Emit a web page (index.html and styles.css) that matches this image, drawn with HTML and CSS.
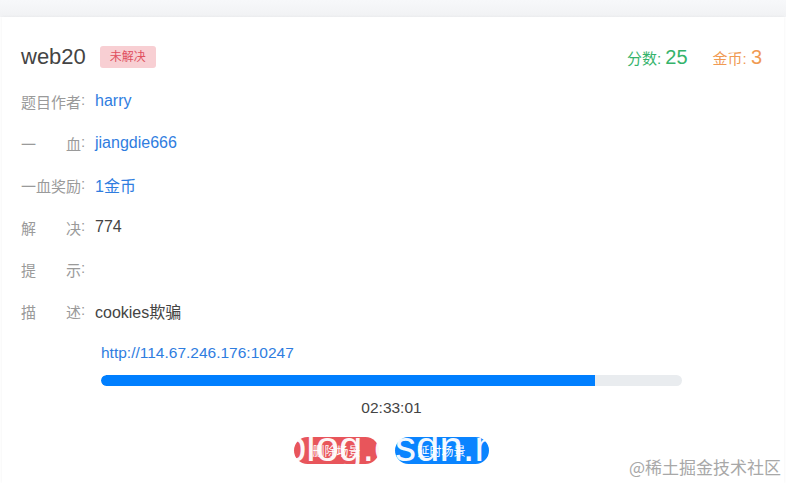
FILE: index.html
```html
<!DOCTYPE html>
<html lang="zh">
<head>
    <meta charset="UTF-8">
    <meta name="viewport" content="width=device-width, initial-scale=1.0">
    <title>web20</title>
    <link rel="stylesheet" href="styles.css">
</head>
<body>

<div class="card">
    <div class="head">
        <div class="title">
            <span class="name">web20</span>
            <span class="badge">未解决</span>
        </div>
        <div class="stats">
            <span class="score">分数: <b>25</b></span>
            <span class="coin">金币: <b>3</b></span>
        </div>
    </div>

    <div class="rows">
        <div class="row"><span class="label"><i>题目作者</i>:</span><span class="value link">harry</span></div>
        <div class="row"><span class="label"><i>一　　血</i>:</span><span class="value link">jiangdie666</span></div>
        <div class="row"><span class="label"><i>一血奖励</i>:</span><span class="value link">1金币</span></div>
        <div class="row"><span class="label"><i>解　　决</i>:</span><span class="value">774</span></div>
        <div class="row"><span class="label"><i>提　　示</i>:</span><span class="value"></span></div>
        <div class="row"><span class="label"><i>描　　述</i>:</span><span class="value">cookies欺骗</span></div>
    </div>

    <div class="scene">
        <a class="url" href="#">http://114.67.246.176:10247</a>
        <div class="bar"><div class="fill" style="width: 85%"></div></div>
        <div class="timer">02:33:01</div>
        <div class="actions">
            <button class="btn red">删除场景</button>
            <button class="btn blue">延时场景</button>
            <span class="wm">blog.csdn.net</span>
        </div>
    </div>
</div>

<div class="credit">@稀土掘金技术社区</div>

</body>
</html>
```

FILE: styles.css
```css
body {
    margin: 0;
    padding-top: 17px;
    background: linear-gradient(#f7f8fa, #f1f2f4 17px, #fff 17px);
    font-family: 'Liberation Sans', 'Noto Sans CJK SC', sans-serif;
    color: #444;
    height: 466px;
    overflow: hidden;
    position: relative;
}

.card {
    margin: 0 2px;
    padding: 28px 22px 0 19px;
    background: #fff;
    box-shadow: 0 0 3px rgba(0, 0, 0, 0.06);
    height: 438px;
}

.head {
    display: flex;
    align-items: center;
    justify-content: space-between;
    height: 24px;
}

.title {
    display: flex;
    align-items: center;
    gap: 14px;
}

.name {
    font-size: 22px;
    color: #444;
}

.badge {
    background: #f8cfd3;
    color: #e0505f;
    font-size: 12px;
    line-height: 22px;
    padding: 0 10px;
    border-radius: 3px;
}

.stats {
    display: flex;
    align-items: baseline;
    gap: 25px;
    font-size: 15px;
}

.stats b {
    font-weight: normal;
    font-size: 20px;
}

.score {
    color: #35b36b;
}

.coin {
    color: #f09a52;
}

.rows {
    margin-top: 11px;
}

.row {
    display: flex;
    align-items: center;
    height: 42px;
    font-size: 15px;
}

.label {
    color: #9a9a9a;
    width: 74px;
    display: flex;
}

.label i {
    font-style: normal;
    width: 60px;
    text-align-last: justify;
    white-space: nowrap;
    display: inline-block;
}

.value {
    color: #444;
    font-size: 16px;
}

.link {
    color: #2f7ddf;
}

.scene {
    margin: 11px 80px 0 80px;
}

.url {
    display: block;
    line-height: 20px;
    font-size: 15.5px;
    color: #2f7ddf;
    text-decoration: none;
}

.bar {
    margin-top: 12px;
    height: 11px;
    border-radius: 6px;
    background: #e9ecef;
    overflow: hidden;
}

.fill {
    height: 100%;
    background: #007fff;
    border-radius: 6px 0 0 6px;
}

.timer {
    margin-top: 12px;
    line-height: 20px;
    text-align: center;
    font-size: 15.5px;
}

.actions {
    position: relative;
    margin-top: 19px;
    display: flex;
    justify-content: center;
    gap: 16px;
}

.btn {
    height: 27px;
    border: none;
    border-radius: 14px;
    color: #fff;
    font-size: 12px;
    font-family: inherit;
    cursor: pointer;
}

.btn.red {
    background: #e8555b;
    padding: 0 18px;
}

.btn.blue {
    background: #0a84ff;
    padding: 0 23px;
}

/* watermark over the buttons */
.wm {
    position: absolute;
    left: 182px;
    top: -14px;
    font-size: 42px;
    color: #fff;
    white-space: nowrap;
    pointer-events: none;
    opacity: 0.95;
}

.credit {
    position: absolute;
    right: 5px;
    bottom: 4px;
    font-size: 17px;
    color: #a8a8a8;
    font-family: 'Noto Sans CJK SC', sans-serif;
}
```
